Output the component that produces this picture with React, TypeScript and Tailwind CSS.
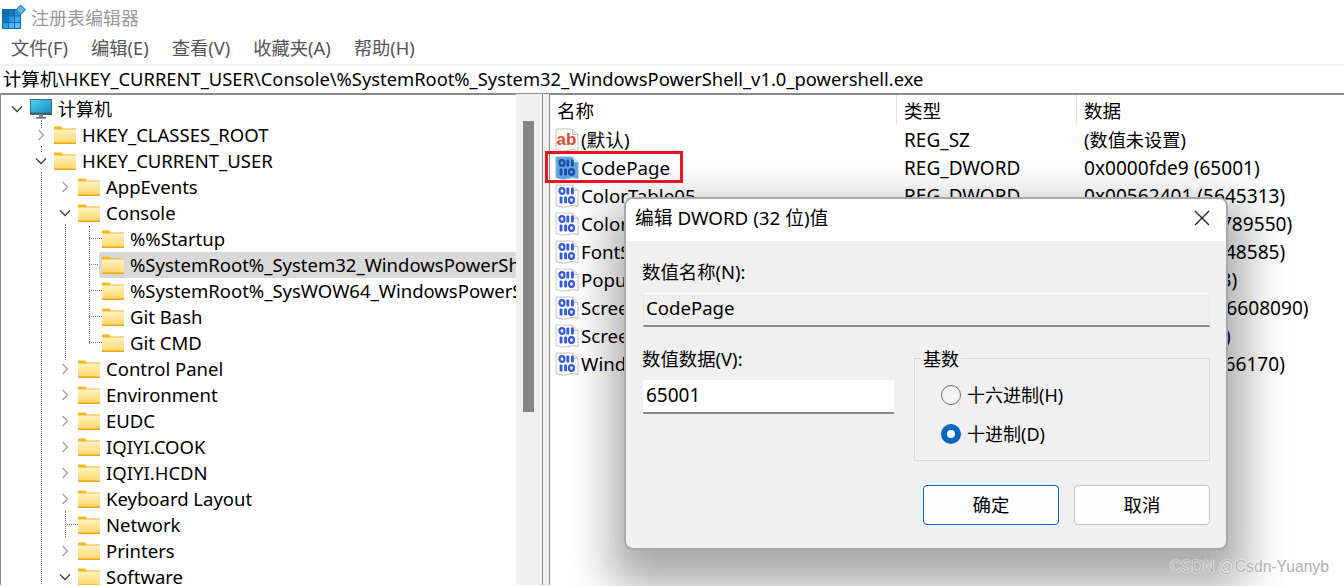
import React from "react";

const FONT = "font-['Noto_Sans','Noto_Sans_CJK_SC',sans-serif]";

function Folder() {
  return (
    <svg width="22" height="18" viewBox="0 0 22 18" className="shrink-0">
      <defs>
        <linearGradient id="fg" x1="0" y1="0" x2="0" y2="1">
          <stop offset="0" stopColor="#fff3c4" />
          <stop offset="1" stopColor="#ffd465" />
        </linearGradient>
      </defs>
      <path d="M0 1.5 Q0 0.5 1 0.5 H7 L9 2.5 H22 V5 H0 Z" fill="#f9b61f" />
      <rect x="0" y="3.5" width="22" height="14" fill="url(#fg)" />
      <rect x="0" y="16.5" width="22" height="1.5" fill="#eaa71e" />
      <rect x="0" y="3" width="22" height="1" fill="#fbd873" />
    </svg>
  );
}

function Computer() {
  return (
    <svg width="22" height="20" viewBox="0 0 22 20" className="shrink-0">
      <defs>
        <linearGradient id="cg" x1="0" y1="0" x2="1" y2="1">
          <stop offset="0" stopColor="#4fd5e8" />
          <stop offset="1" stopColor="#1186c9" />
        </linearGradient>
      </defs>
      <rect x="0.5" y="0.5" width="21" height="15" fill="url(#cg)" stroke="#3f6f86" />
      <rect x="0" y="13.5" width="22" height="2" fill="#40606f" />
      <rect x="9" y="15.5" width="4" height="2.5" fill="#7d8a92" />
      <rect x="6" y="18" width="10" height="1.5" fill="#56656e" />
    </svg>
  );
}

function Page({ children, fill = "#fcfcfc", stroke = "#c4c4c4" }: { children?: React.ReactNode; fill?: string; stroke?: string }) {
  return (
    <svg width="24" height="24" viewBox="0 0 24 24" className="shrink-0">
      <path d="M1 1 H17.5 L23 6.5 V22.5 Q18 20.5 13 22.5 T1 21.5 Z" fill={fill} stroke={stroke} />
      <path d="M17.5 1 V6.5 H23" fill="#e6e6e6" stroke={stroke} />
      {children}
    </svg>
  );
}

function Bits({ color }: { color: string }) {
  return (
    <g fill={color}>
      <ellipse cx="7" cy="7" rx="2.5" ry="2.8" fill="none" stroke={color} strokeWidth="2.2" />
      <rect x="11.4" y="3.4" width="2.8" height="7.2" rx="1" />
      <rect x="16" y="3.4" width="2.8" height="7.2" rx="1" />
      <rect x="4.6" y="12.4" width="2.8" height="7.2" rx="1" />
      <rect x="9.2" y="12.4" width="2.8" height="7.2" rx="1" />
      <ellipse cx="16.5" cy="16" rx="2.5" ry="2.8" fill="none" stroke={color} strokeWidth="2.2" />
    </g>
  );
}

function RegIcon({ kind }: { kind: "sz" | "dword" | "sel" }) {
  if (kind === "sz")
    return (
      <Page>
        <text x="1.5" y="17" fontSize="17" fontWeight="700" fill="#d9502e" fontFamily="'Liberation Sans',sans-serif">
          ab
        </text>
      </Page>
    );
  if (kind === "sel")
    return (
      <Page fill="#5ea5e2" stroke="#7db4e4">
        <Bits color="#1e4c9e" />
      </Page>
    );
  return (
    <Page>
      <Bits color="#3358dc" />
    </Page>
  );
}

function Chevron({ open, dark }: { open?: boolean; dark?: boolean }) {
  return (
    <svg width="14" height="14" viewBox="0 0 14 14" className="shrink-0">
      {open ? (
        <path d="M2 4.5 L7 9.5 L12 4.5" fill="none" stroke="#404040" strokeWidth="1.4" />
      ) : (
        <path d="M4.5 2 L9.5 7 L4.5 12" fill="none" stroke={dark ? "#404040" : "#a6a6a6"} strokeWidth="1.4" />
      )}
    </svg>
  );
}

type Row = { d: number; label: string; st?: "open" | "closed" | "leaf"; sel?: boolean };

const tree: Row[] = [
  { d: 1, label: "HKEY_CLASSES_ROOT", st: "closed" },
  { d: 1, label: "HKEY_CURRENT_USER", st: "open" },
  { d: 2, label: "AppEvents", st: "closed" },
  { d: 2, label: "Console", st: "open" },
  { d: 3, label: "%%Startup", st: "leaf" },
  { d: 3, label: "%SystemRoot%_System32_WindowsPowerShell_v1.0_powershell.exe", st: "leaf", sel: true },
  { d: 3, label: "%SystemRoot%_SysWOW64_WindowsPowerShell_v1.0_powershell.exe", st: "leaf" },
  { d: 3, label: "Git Bash", st: "leaf" },
  { d: 3, label: "Git CMD", st: "leaf" },
  { d: 2, label: "Control Panel", st: "closed" },
  { d: 2, label: "Environment", st: "closed" },
  { d: 2, label: "EUDC", st: "closed" },
  { d: 2, label: "IQIYI.COOK", st: "closed" },
  { d: 2, label: "IQIYI.HCDN", st: "closed" },
  { d: 2, label: "Keyboard Layout", st: "closed" },
  { d: 2, label: "Network", st: "leaf" },
  { d: 2, label: "Printers", st: "closed" },
  { d: 2, label: "Software", st: "open" },
];

const values: { icon: "sz" | "dword" | "sel"; name: string; type: string; data: string }[] = [
  { icon: "sz", name: "(默认)", type: "REG_SZ", data: "(数值未设置)" },
  { icon: "sel", name: "CodePage", type: "REG_DWORD", data: "0x0000fde9 (65001)" },
  { icon: "dword", name: "ColorTable05", type: "REG_DWORD", data: "0x00562401 (5645313)" },
  { icon: "dword", name: "ColorTable06", type: "REG_DWORD", data: "0x00f0edee (15789550)" },
  { icon: "dword", name: "FontSize", type: "REG_DWORD", data: "0x00100009 (1048585)" },
  { icon: "dword", name: "PopupColors", type: "REG_DWORD", data: "0x000000f3 (243)" },
  { icon: "dword", name: "ScreenBufferSize", type: "REG_DWORD", data: "0x0bb8005a (196608090)" },
  { icon: "dword", name: "ScreenColors", type: "REG_DWORD", data: "0x00000056 (86)" },
  { icon: "dword", name: "WindowSize", type: "REG_DWORD", data: "0x001e005a (1966170)" },
];

function TreeRow({ r }: { r: Row }) {
  const chevronMargin = r.d === 1 ? "ml-[33px]" : "ml-[57px]";
  return (
    <div className="relative h-[26px] flex items-center whitespace-nowrap">
      {r.st === "leaf" ? (
        <div className={r.d === 3 ? "w-[101px] shrink-0" : "w-[77px] shrink-0"} />
      ) : (
        <div className={`${chevronMargin} w-[20px] shrink-0 flex`}>
          <Chevron open={r.st === "open"} />
        </div>
      )}
      {r.sel && <div className="absolute left-[98px] right-0 top-0 bottom-0 bg-[#d9d9d9] rounded-[2px]" />}
      <div className="relative flex items-center">
        <Folder />
        <span className="ml-[6px]">{r.label}</span>
      </div>
    </div>
  );
}

function Guide({ className }: { className: string }) {
  return <div className={`absolute border-dotted border-[#777] ${className}`} />;
}

export default function App() {
  return (
    <div className={`${FONT} relative w-[1344px] h-[586px] overflow-hidden bg-white text-[18.6px] leading-[26px] text-black`}>
      <div className="absolute left-[612px] top-[205px] w-[633px] h-[380px] bg-[#a8a8a8] blur-[22px]" />
      <div className="relative h-[36px] flex items-center pl-[2px]">
        <svg width="24" height="26" viewBox="0 0 24 26" className="shrink-0">
          <rect x="0" y="4" width="19" height="20" fill="#0e69ad" />
          <rect x="1" y="5" width="5" height="5.5" fill="#0b6cb0" />
          <rect x="7" y="5" width="5" height="5.5" fill="#1279c2" />
          <rect x="13" y="5" width="5" height="5.5" fill="#2c93d6" />
          <rect x="1" y="11.5" width="5" height="5.5" fill="#1179c2" />
          <rect x="7" y="11.5" width="5" height="5.5" fill="#2a97db" />
          <rect x="13" y="11.5" width="5" height="5.5" fill="#39aee8" />
          <rect x="1" y="18" width="5" height="5" fill="#2a9fe0" />
          <rect x="7" y="18" width="5" height="5" fill="#46b8f0" />
          <rect x="13" y="18" width="5" height="5" fill="#52c4f5" />
          <rect x="15.5" y="1.5" width="6.5" height="6.5" transform="rotate(45 18.75 4.75)" fill="#5db4e6" stroke="#2582c0" />
        </svg>
        <span className="ml-[5px] text-[18px] text-[#999]">注册表编辑器</span>
      </div>
      <div className="relative h-[28px] flex items-center pl-[11px] pb-[5px] gap-[23px] text-[18.3px] text-[#555]">
        <span>文件(F)</span>
        <span>编辑(E)</span>
        <span>查看(V)</span>
        <span>收藏夹(A)</span>
        <span>帮助(H)</span>
      </div>
      <div className="relative h-[2px] bg-[#f3f3f3]" />
      <div className="relative h-[29px] pl-[3px] pb-[2px] flex items-center border-b-2 border-[#8a8a8a] whitespace-nowrap text-[18.35px]">
        计算机\HKEY_CURRENT_USER\Console\%SystemRoot%_System32_WindowsPowerShell_v1.0_powershell.exe
      </div>

      <div className="relative flex h-[491px] -mt-px">
        <div className="relative w-[516px] shrink-0 overflow-hidden border-l border-[#8a8a8a] pt-[2px] text-[18.5px]">
          <Guide className="left-[40px] top-[26px] h-[8px] border-l" />
          <Guide className="left-[40px] top-[52px] h-[6px] border-l" />
          <Guide className="left-[40px] top-[78px] h-[420px] border-l" />
          <Guide className="left-[64px] top-[130px] h-[136px] border-l" />
          <Guide className="left-[64px] top-[417px] h-[26px] border-l" />
          <Guide className="left-[64px] top-[418px] w-[13px] h-[13px] border-b" />
          <Guide className="left-[88px] top-[132px] h-[118px] border-l" />
          <Guide className="left-[88px] top-[144px] w-[13px] border-b" />
          <Guide className="left-[88px] top-[170px] w-[13px] border-b" />
          <Guide className="left-[88px] top-[196px] w-[13px] border-b" />
          <Guide className="left-[88px] top-[222px] w-[13px] border-b" />
          <Guide className="left-[88px] top-[248px] w-[13px] border-b" />
          <div className="relative h-[26px] flex items-center whitespace-nowrap pl-[9px]">
            <Chevron open />
            <div className="ml-[6px]">
              <Computer />
            </div>
            <span className="ml-[6px] text-[18px]">计算机</span>
          </div>
          {tree.map((r) => (
            <TreeRow key={r.label + r.d} r={r} />
          ))}
        </div>

        <div className="w-[26px] shrink-0 bg-[#f0f0f0] pl-[7px] pt-[27px]">
          <div className="w-[11px] h-[291px] bg-[#858585]" />
        </div>
        <div className="w-[8px] shrink-0 bg-[#f0f0f0] border-x border-[#8a8a8a]" />

        <div className="flex-1 min-w-0 whitespace-nowrap">
          <div className="flex h-[32px] items-center">
            <div className="w-[347px] pl-[7px] pt-[2px] h-[30px] flex items-center border-r border-[#e3e3e3]">名称</div>
            <div className="w-[180px] pl-[7px] pt-[2px] h-[30px] flex items-center border-r border-[#e3e3e3]">类型</div>
            <div className="pl-[7px] pt-[2px]">数据</div>
          </div>
          {values.map((v) => (
            <div key={v.name} className="flex h-[28px] items-center">
              <div className="w-[347px] pl-[5px] flex items-center text-[18.7px]">
                <RegIcon kind={v.icon} />
                <span className="ml-[2px]">{v.name}</span>
              </div>
              <div className="w-[180px] pl-[7px] text-[19px]">{v.type}</div>
              <div className={v.icon === "sz" ? "pl-[7px] text-[18.2px]" : "pl-[7px] text-[19.1px]"}>{v.data}</div>
            </div>
          ))}
        </div>
      </div>

      <div className="absolute left-[545px] top-[151px] w-[138px] h-[32px] border-[3px] border-[#e8141f]" />

      <div className="absolute left-[624px] top-[197px] w-[604px] h-[353px] rounded-[9px] border-2 border-[#a9a9a9] bg-[#f0f0f0]">
        <div className="h-[42px] bg-white rounded-t-[7px] flex items-center justify-between pl-[9px] pr-[16px] pb-[4px] text-[18.8px]">
          <span>编辑 DWORD (32 位)值</span>
          <svg width="16" height="16" viewBox="0 0 16 16">
            <path d="M1 1 L15 15 M15 1 L1 15" stroke="#222" strokeWidth="1.3" />
          </svg>
        </div>
        <div className="pl-[16px] pr-[16px] pt-[18px] text-[18.4px]">
          <div className="h-[26px]">数值名称(N):</div>
          <div className="mt-[8px] ml-px h-[34px] border border-[#e6e6e6] border-b-2 border-b-[#8a8a8a] border-t-white bg-[#efefef] pl-[2px] pb-[3px] flex items-center text-[18.6px]">
            CodePage
          </div>
          <div className="flex mt-[31px]">
            <div className="w-[272px] shrink-0">
              <div className="h-[26px] -mt-[12px]">数值数据(V):</div>
              <div className="mt-[8px] ml-px w-[251px] h-[34px] bg-white border-b-2 border-[#8a8a8a] pl-[3px] pb-[3px] flex items-center text-[19px]">
                65001
              </div>
            </div>
            <div className="relative w-[297px] h-[103px] border border-[#d9d9d9] pl-[26px] pt-[25px] text-[18px]">
              <div className="absolute left-[6px] -top-[13px] px-[2px] bg-[#f0f0f0]">基数</div>
              <div className="flex items-center h-[22px]">
                <div className="w-[20px] h-[20px] rounded-full border border-[#707070] bg-[#f3f3f3]" />
                <span className="ml-[6px]">十六进制(H)</span>
              </div>
              <div className="flex items-center h-[22px] mt-[17px]">
                <div className="w-[20px] h-[20px] rounded-full border-[6px] border-[#0067c0] bg-white" />
                <span className="ml-[6px]">十进制(D)</span>
              </div>
            </div>
          </div>
          <div className="flex justify-end gap-[15px] mt-[24px]">
            <div className="w-[136px] h-[40px] rounded-[4px] border border-[#0067c0] bg-[#fdfdfd] flex items-center justify-center">确定</div>
            <div className="w-[136px] h-[40px] rounded-[4px] border border-[#c4c4c4] bg-[#fdfdfd] flex items-center justify-center">取消</div>
          </div>
        </div>
      </div>

      <div className="absolute left-[1170px] top-[556px] font-['Liberation_Sans',sans-serif] text-[15.7px] leading-[22px] text-[#b0b0b0] [text-shadow:0_0_2px_#ffffff,0_0_1px_#ffffff]">
        CSDN @Csdn-Yuanyb
      </div>
    </div>
  );
}
